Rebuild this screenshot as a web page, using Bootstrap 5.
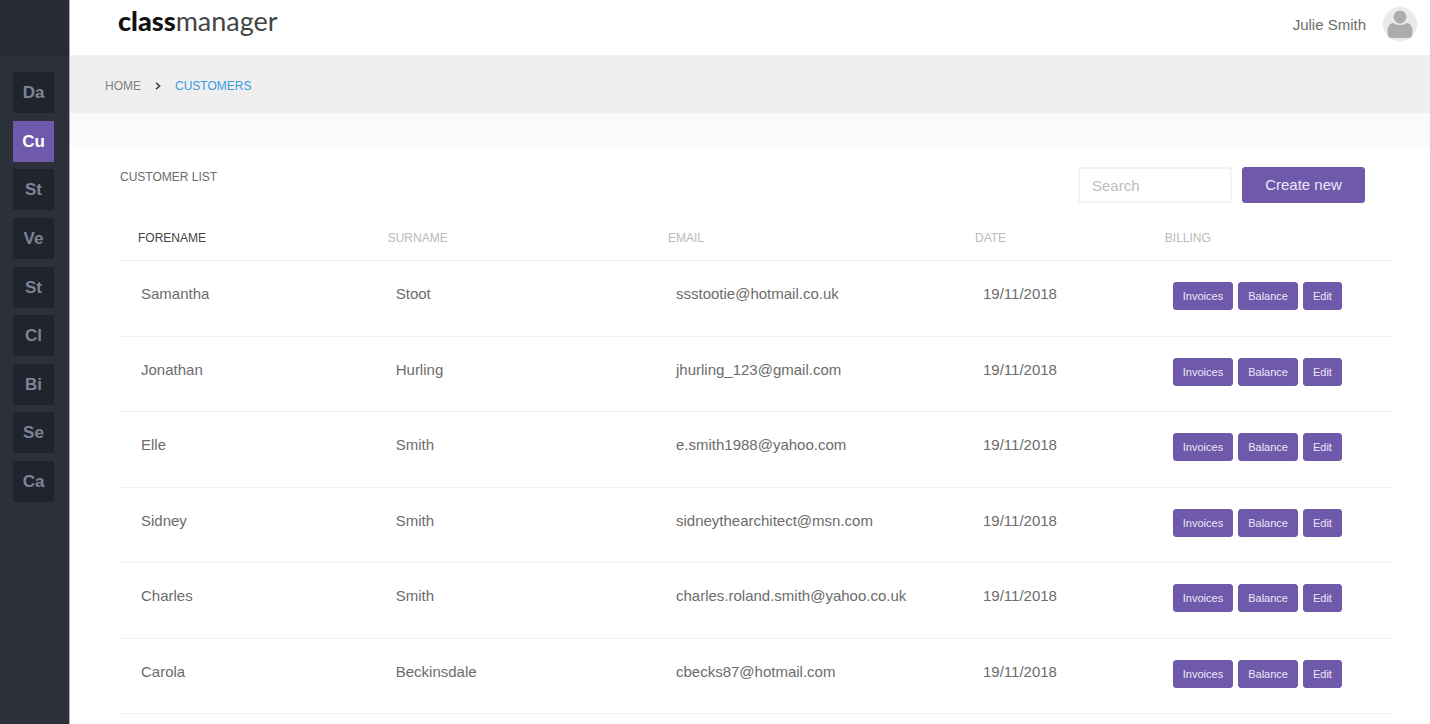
<!DOCTYPE html>
<html lang="en">
<head>
<meta charset="utf-8">
<meta name="viewport" content="width=device-width, initial-scale=1">
<title>classmanager - Customers</title>
<link href="https://cdn.jsdelivr.net/npm/bootstrap@5.3.0/dist/css/bootstrap.min.css" rel="stylesheet">
<style>
  :root { --brand: #6e59ab; --line: #f1f1f1; }
  body { font-family: "Liberation Sans", Arial, sans-serif; font-size: 15px; line-height: 20px; color: #6c6c6c; background: #fff; }

  /* Sidebar */
  .side { width: 70px; background: #2c303b; border-right: 1px solid #a9abb1; }
  .side-top { height: 56px; background: #262b36; }
  .side-menu { height: 430px; margin: 16px 14px 0 13px; }
  .side-menu a { width: 41px; height: 41px; padding-top: 1px; background: #20242d; color: #7e8498; font-size: 17px; font-weight: bold; }
  .side-menu a.active { background: var(--brand); color: #fff; }

  /* Top bar and breadcrumb */
  .topbar { height: 55px; padding: 0 12px 0 48px; }
  .brand-name { font: 400 27px/32px Lato, sans-serif; color: #444; padding-bottom: 14px; }
  .brand-name b { font-weight: 900; color: #111; }
  .user-name { color: #6c6c6c; padding-bottom: 5px; }
  .crumbs { height: 58px; padding: 4px 35px 0 35px; background: #efefef; }
  .crumbs .breadcrumb { font-size: 12px; gap: 14px; padding-bottom: 0; }
  .crumbs a { color: #808080; }
  .crumbs .current { color: #3b9adb; }
  .strip { height: 34px; background: #fafafa; }

  /* Customer list */
  .panel { padding: 20px 36px 0 50px; }
  .panel-head { padding-right: 29px; gap: 10px; }
  .panel-head h1 { font-size: 12px; line-height: 20px; }
  .search-box { width: 154px; height: 36px; padding: 0 12px; font-size: 15px; border: 2px solid #f3f3f3; border-radius: 2px; }
  .search-box::placeholder { color: #bdbdbd; }
  .btn-brand { --bs-btn-color: #ece8f8; --bs-btn-bg: var(--brand); --bs-btn-border-color: var(--brand); --bs-btn-hover-color: #fff; --bs-btn-hover-bg: #5d4a97; --bs-btn-hover-border-color: #5d4a97; --bs-btn-border-radius: 3px; --bs-btn-line-height: 18px; }
  .btn-create { width: 123px; height: 36px; --bs-btn-padding-x: 0; --bs-btn-padding-y: 0; --bs-btn-font-size: 15px; }
  .row-actions { gap: 5px; }
  .btn-row { height: 28px; --bs-btn-padding-x: 9px; --bs-btn-padding-y: 0; --bs-btn-font-size: 11px; }

  .customers { table-layout: fixed; --bs-table-bg: transparent; color: #6c6c6c; border-color: var(--line); }
  .customers th { font-size: 12px; line-height: 18px; font-weight: normal; color: #bababa; padding: 26px 0 13px 18px; }
  .customers th.sorted { color: #444; }
  .customers td { color: #6c6c6c; padding: 21px 0 0 26px; vertical-align: top; }
  .customers td:first-child { padding-left: 21px; }
  .customers tbody tr { height: 75px; }
  .customers tbody tr:nth-child(odd) { height: 76px; }
  .customers td span { display: block; padding-top: 2px; }
  .c-forename { width: 19.6%; }
  .c-surname { width: 22%; }
  .c-email { width: 24.1%; }
  .c-date { width: 14.9%; }
</style>
</head>
<body>
<div class="d-flex min-vh-100">
  <aside class="side flex-shrink-0">
    <div class="side-top"></div>
    <nav class="side-menu d-flex flex-column justify-content-between" aria-label="Sections">
      <a href="#" class="d-flex align-items-center justify-content-center text-decoration-none">Da</a>
      <a href="#" class="d-flex align-items-center justify-content-center text-decoration-none active" aria-current="page">Cu</a>
      <a href="#" class="d-flex align-items-center justify-content-center text-decoration-none">St</a>
      <a href="#" class="d-flex align-items-center justify-content-center text-decoration-none">Ve</a>
      <a href="#" class="d-flex align-items-center justify-content-center text-decoration-none">St</a>
      <a href="#" class="d-flex align-items-center justify-content-center text-decoration-none">Cl</a>
      <a href="#" class="d-flex align-items-center justify-content-center text-decoration-none">Bi</a>
      <a href="#" class="d-flex align-items-center justify-content-center text-decoration-none">Se</a>
      <a href="#" class="d-flex align-items-center justify-content-center text-decoration-none">Ca</a>
    </nav>
  </aside>

  <div class="flex-grow-1">
    <header class="topbar d-flex align-items-center justify-content-between">
      <a href="#" class="brand-name text-decoration-none"><b>class</b>manager</a>
      <a href="#" class="d-flex align-items-center text-decoration-none gap-3">
        <span class="user-name">Julie Smith</span>
        <svg class="mb-2" width="36" height="36" viewBox="0 0 36 36" aria-hidden="true">
          <circle cx="18" cy="18" r="17" fill="#eaeaea"/>
          <circle cx="18" cy="11" r="6.500" fill="#adadad"/>
          <path d="M11.500 17c2 1.400 4 2 6.500 2s4.500-.6 6.500-2c4 .3 6 3.500 6 8.500 0 4.500-1 6.500-4 6.500h-17c-3 0-4-2-4-6.500 0-5 2-8.200 6-8.500z" fill="#adadad"/>
        </svg>
      </a>
    </header>

    <nav class="crumbs d-flex align-items-center" aria-label="Breadcrumb">
      <ol class="breadcrumb align-items-center mb-0">
        <li><a href="#" class="text-decoration-none">HOME</a></li>
        <li class="d-flex" aria-hidden="true">
          <svg width="6" height="8" viewBox="0 0 6 8"><path d="M1 .8 4.600 4 1 7.200" fill="none" stroke="#444" stroke-width="1.600"/></svg>
        </li>
        <li class="current" aria-current="page">CUSTOMERS</li>
      </ol>
    </nav>
    <div class="strip"></div>

    <main class="panel">
      <div class="panel-head d-flex align-items-start">
        <h1 class="me-auto mb-0 fw-normal">CUSTOMER LIST</h1>
        <input type="search" class="form-control search-box" placeholder="Search" aria-label="Search customers">
        <button type="button" class="btn btn-brand btn-create">Create new</button>
      </div>

      <table class="table customers mb-0">
        <thead>
          <tr>
            <th scope="col" class="c-forename sorted">FORENAME</th>
            <th scope="col" class="c-surname">SURNAME</th>
            <th scope="col" class="c-email">EMAIL</th>
            <th scope="col" class="c-date">DATE</th>
            <th scope="col">BILLING</th>
          </tr>
        </thead>
        <tbody>
          <tr>
            <td><span>Samantha</span></td><td><span>Stoot</span></td><td><span>ssstootie@hotmail.co.uk</span></td><td><span>19/11/2018</span></td>
            <td><div class="d-flex row-actions"><button type="button" class="btn btn-brand btn-row">Invoices</button><button type="button" class="btn btn-brand btn-row">Balance</button><button type="button" class="btn btn-brand btn-row">Edit</button></div></td>
          </tr>
          <tr>
            <td><span>Jonathan</span></td><td><span>Hurling</span></td><td><span>jhurling_123@gmail.com</span></td><td><span>19/11/2018</span></td>
            <td><div class="d-flex row-actions"><button type="button" class="btn btn-brand btn-row">Invoices</button><button type="button" class="btn btn-brand btn-row">Balance</button><button type="button" class="btn btn-brand btn-row">Edit</button></div></td>
          </tr>
          <tr>
            <td><span>Elle</span></td><td><span>Smith</span></td><td><span>e.smith1988@yahoo.com</span></td><td><span>19/11/2018</span></td>
            <td><div class="d-flex row-actions"><button type="button" class="btn btn-brand btn-row">Invoices</button><button type="button" class="btn btn-brand btn-row">Balance</button><button type="button" class="btn btn-brand btn-row">Edit</button></div></td>
          </tr>
          <tr>
            <td><span>Sidney</span></td><td><span>Smith</span></td><td><span>sidneythearchitect@msn.com</span></td><td><span>19/11/2018</span></td>
            <td><div class="d-flex row-actions"><button type="button" class="btn btn-brand btn-row">Invoices</button><button type="button" class="btn btn-brand btn-row">Balance</button><button type="button" class="btn btn-brand btn-row">Edit</button></div></td>
          </tr>
          <tr>
            <td><span>Charles</span></td><td><span>Smith</span></td><td><span>charles.roland.smith@yahoo.co.uk</span></td><td><span>19/11/2018</span></td>
            <td><div class="d-flex row-actions"><button type="button" class="btn btn-brand btn-row">Invoices</button><button type="button" class="btn btn-brand btn-row">Balance</button><button type="button" class="btn btn-brand btn-row">Edit</button></div></td>
          </tr>
          <tr>
            <td><span>Carola</span></td><td><span>Beckinsdale</span></td><td><span>cbecks87@hotmail.com</span></td><td><span>19/11/2018</span></td>
            <td><div class="d-flex row-actions"><button type="button" class="btn btn-brand btn-row">Invoices</button><button type="button" class="btn btn-brand btn-row">Balance</button><button type="button" class="btn btn-brand btn-row">Edit</button></div></td>
          </tr>
        </tbody>
      </table>
    </main>
  </div>
</div>
<script src="https://cdn.jsdelivr.net/npm/bootstrap@5.3.0/dist/js/bootstrap.bundle.min.js"></script>
</body>
</html>
